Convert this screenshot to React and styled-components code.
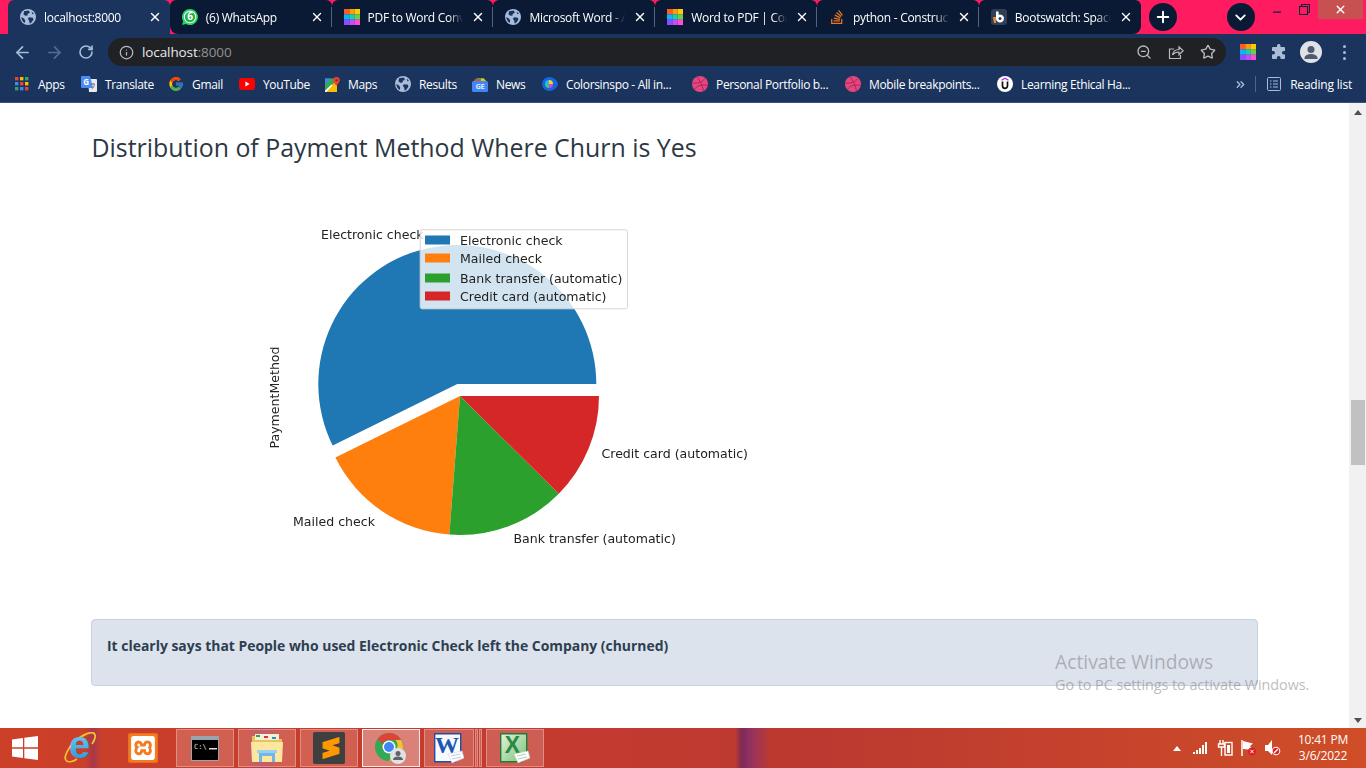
import React from "react"
import styled, { createGlobalStyle } from "styled-components"
import { FaStackOverflow } from "react-icons/fa"
import { FcGoogle } from "react-icons/fc"
import { SiXampp, SiSublimetext } from "react-icons/si"
import { ArrowLeft, ArrowRight, RotateCw, Info, ZoomOut, Star, Plus, ChevronDown, X, Minus, ChevronsRight } from "lucide-react"

const Global = createGlobalStyle`
  html, body { margin: 0; padding: 0; height: 100%; overflow: hidden; background: #fff; }
  * { box-sizing: border-box; }
`

const Screen = styled.div`
  width: 1366px;
  height: 768px;
  display: flex;
  flex-direction: column;
  overflow: hidden;
  position: relative;
  font-family: "Open Sans", "Liberation Sans", sans-serif;
`

/* ---- browser chrome ---- */
const TabStrip = styled.div`
  height: 34px;
  flex: none;
  display: flex;
  align-items: flex-end;
  padding-left: 8px;
  background: #ff1b60;
  color: #fff;
`

const Tab = styled.div`
  position: relative;
  width: 161.8px;
  height: 34px;
  flex: none;
  display: flex;
  align-items: center;
  padding: 0 8px 0 12px;
  gap: 8px;
  font-size: 12px;
  letter-spacing: -0.28px;
  white-space: nowrap;
  background: ${p => (p.$active ? "#1a345e" : "#0a1a35")};
  border-radius: 6px 6px 0 0;
  ${p => p.$afterActive && "border-bottom-left-radius: 8px;"}
  ${p => p.$last && "border-bottom-right-radius: 8px;"}
  ${p => p.$sep && `
    &::after {
      content: "";
      position: absolute;
      right: 0;
      top: 7px;
      bottom: 7px;
      width: 1px;
      background: #56637a;
    }
  `}
`

const TabTitle = styled.span`
  flex: 1;
  min-width: 0;
  overflow: hidden;
  -webkit-mask-image: linear-gradient(90deg, #000 85%, transparent);
  mask-image: linear-gradient(90deg, #000 85%, transparent);
`

const TabClose = styled(X)`
  flex: none;
  width: 14px;
  height: 14px;
`

const RoundButton = styled.div`
  width: 28px;
  height: 28px;
  flex: none;
  border-radius: 50%;
  background: #0a1a35;
  margin-left: ${p => p.$left}px;
  align-self: center;
  display: flex;
  align-items: center;
  justify-content: center;
`

const WindowControls = styled.div`
  align-self: flex-start;
  display: flex;
  margin-left: auto;
  height: 19px;
  padding-right: 3px;
`

const WinButton = styled.div`
  width: ${p => p.$w}px;
  height: 19px;
  padding-top: ${p => p.$pt || 0}px;
  display: flex;
  align-items: center;
  justify-content: center;
  background: ${p => p.$bg || "transparent"};
`

const Toolbar = styled.div`
  height: 35px;
  flex: none;
  display: flex;
  align-items: center;
  background: #1a345e;
  padding: 1px 0 0 6px;
  color: #a9bcd8;
`

const NavIcon = styled.div`
  width: 32px;
  height: 28px;
  flex: none;
  margin-left: ${p => p.$left || 0}px;
  display: flex;
  align-items: center;
  justify-content: center;
  color: ${p => (p.$off ? "#566c90" : "#a9bcd8")};
`

const Omnibox = styled.div`
  width: 1118px;
  height: 28px;
  margin-left: 6px;
  flex: none;
  display: flex;
  align-items: center;
  border-radius: 14px;
  background: #202124;
  padding: 0 2px 0 11px;
  font-size: 13.5px;
  letter-spacing: -0.1px;
  color: #e8eaed;
`

const Host = styled.span`
  flex: 1;
  margin-left: 8px;
  span { color: #8f9296; }
`

const OmniIcon = styled.div`
  width: 32px;
  display: flex;
  justify-content: center;
  color: #b8bbbf;
`

const ToolIcons = styled.div`
  display: flex;
  align-items: center;
  margin-left: 14px;
`

const Avatar = styled.div`
  width: 22px;
  height: 22px;
  border-radius: 50%;
  background: #dfe3e8;
  overflow: hidden;
  margin: 0 21px 0 5px;
`

const Dots = styled.div`
  display: flex;
  flex-direction: column;
  gap: 3px;
  i { display: block; width: 3px; height: 3px; border-radius: 50%; background: #a9bcd8; }
`

const BookmarkBar = styled.div`
  height: 34px;
  flex: none;
  display: flex;
  align-items: center;
  background: #1a345e;
  border-bottom: 1px solid #3b5278;
  padding: 0 0 3px 15px;
  color: #fff;
  font-size: 12px;
  letter-spacing: -0.34px;
`

const Bookmark = styled.div`
  width: ${p => p.$w}px;
  flex: none;
  display: flex;
  align-items: center;
  gap: ${p => p.$gap || 8}px;
  white-space: nowrap;
`

const BarEnd = styled.div`
  margin-left: auto;
  display: flex;
  align-items: center;
  padding-right: 14px;
  color: #a9bcd8;
`

const BarDivider = styled.div`
  width: 1px;
  height: 16px;
  background: #4d6488;
  margin: 0 11px 0 8px;
`

const ReadingLabel = styled.span`
  color: #fff;
  margin-left: 9px;
  letter-spacing: -0.2px;
`

/* ---- page ---- */
const Viewport = styled.div`
  flex: 1;
  min-height: 0;
  display: flex;
  background: #fff;
`

const Main = styled.main`
  flex: 1;
  min-width: 0;
  padding: 27px 91px 0 91px;
`

const Title = styled.h3`
  margin: 0 0 0 0.5px;
  font-size: 24.9px;
  line-height: 34px;
  font-weight: 400;
  color: #2d3845;
`

const Chart = styled.svg`
  display: block;
  width: 500px;
  height: 330px;
  margin: 56px 0 0 169px;
  filter: blur(0.25px);
  text { font-family: "DejaVu Sans", sans-serif; font-size: 12.55px; fill: #222; }
`

const Alert = styled.div`
  margin-top: 69px;
  height: 67px;
  padding: 16px 15px;
  background: #dce3ec;
  border: 1px solid #c6d2df;
  border-radius: 4px;
  font-size: 13.93px;
  line-height: 20px;
  font-weight: 700;
  color: #2d3e50;
`

const Scrollbar = styled.div`
  width: 17px;
  flex: none;
  background: #f1f1f1;
  position: relative;
`

const ScrollThumb = styled.div`
  position: absolute;
  top: 297px;
  left: 2px;
  right: 1px;
  height: 65px;
  background: #c1c1c1;
`

const ScrollArrow = styled.div`
  position: absolute;
  left: 5px;
  width: 0;
  height: 0;
  border-left: 4px solid transparent;
  border-right: 4px solid transparent;
  ${p => (p.$up ? "top: 7px; border-bottom: 5px solid #505050;" : "bottom: 5px; border-top: 5px solid #505050;")}
`

const Watermark = styled.div`
  position: absolute;
  left: 1055px;
  top: 649px;
  color: rgba(120, 120, 120, 0.5);
  font-family: "Open Sans", sans-serif;
  pointer-events: none;
`

const WatermarkTitle = styled.div`
  font-size: 19.3px;
  line-height: 26px;
`

const WatermarkText = styled.div`
  font-size: 14.4px;
  line-height: 19px;
  letter-spacing: -0.05px;
`

/* ---- taskbar ---- */
const Taskbar = styled.div`
  height: 40px;
  flex: none;
  display: flex;
  align-items: center;
  color: #fff;
  background:
    linear-gradient(90deg, transparent 735px, #7c2a55 742px, #8e2f63 748px, #a33650 758px, transparent 770px),
    linear-gradient(90deg, transparent 85px, #a8384a 93px, transparent 102px, transparent 245px, #b03c50 262px, transparent 280px),
    linear-gradient(90deg, #cc4029, #c23a30 45%, #bb3930 60%, #c5432c 80%, #cf4e27);
`

const Pinned = styled.div`
  width: ${p => p.$w}px;
  margin-right: ${p => p.$right || 0}px;
  flex: none;
  display: flex;
  justify-content: center;
`

const TaskButton = styled.div`
  width: ${p => p.$w || 58}px;
  height: 38px;
  margin-right: ${p => (p.$gap === undefined ? 4 : p.$gap)}px;
  flex: none;
  display: flex;
  align-items: center;
  justify-content: center;
  background: ${p => (p.$active ? "rgba(255,255,255,0.36)" : "rgba(255,255,255,0.18)")};
  border: 1px solid ${p => (p.$active ? "rgba(255,255,255,0.85)" : "rgba(255,255,255,0.3)")};
`

const Tray = styled.div`
  margin-left: auto;
  display: flex;
  align-items: center;
`

const TrayIcon = styled.div`
  width: 24px;
  display: flex;
  justify-content: center;
`

const Clock = styled.div`
  width: 68px;
  margin: 0 9px 0 4px;
  text-align: center;
  font-size: 12px;
  line-height: 16px;
  letter-spacing: -0.2px;
`

/* ---- small drawings ---- */
const Globe = ({ c = "#a9bcd8", d = "#1a345e" }) => (
  <svg width="16" height="16" viewBox="0 0 16 16">
    <circle cx="8" cy="8" r="8" fill={c} />
    <path d="M4 2.2 8.6 1.5 10 3.5 7.6 5 7.6 6.6 5.4 6.8 3.5 5.4ZM9 8.2l4 .6.4 2-2.4 3.2-1.4.4-.4-3-1.4-1.4ZM1.2 8 4 9.4l1.2 2.2-.4 2.4C2.8 12.8 1.4 10.6 1.2 8Z" fill={d} />
    <path d="M11.5 2.5l2.5 2.2-1.6.6Z" fill={d} />
  </svg>
)

const Rainbow = () => {
  const colors = ["#ff5a1f", "#ff9a0a", "#ffc80a", "#0ab4ff", "#18d0b0", "#6ad04a", "#8a4dff", "#c04dff", "#ff4dd8"]
  return (
    <svg width="16" height="16" viewBox="0 0 15 15">
      {colors.map((c, i) => (
        <rect key={c} x={(i % 3) * 5} y={Math.floor(i / 3) * 5} width="5.1" height="5.1" fill={c} />
      ))}
    </svg>
  )
}

const WhatsApp = () => (
  <svg width="16" height="16" viewBox="0 0 16 16">
    <path d="M8 0a8 8 0 0 0-6.8 12.2L0 16l3.9-1.1A8 8 0 1 0 8 0Z" fill="#25d366" />
    <circle cx="8" cy="8" r="6.2" fill="#fff" />
    <circle cx="8" cy="8" r="5.2" fill="#25b04c" />
    <text x="8" y="11.4" textAnchor="middle" fontSize="10" fontWeight="700" fill="#fff" fontFamily="Open Sans">6</text>
  </svg>
)

const Bootswatch = () => (
  <svg width="16" height="16" viewBox="0 0 16 16">
    <rect width="16" height="16" rx="3" fill="#2f4056" />
    <path d="M5 2.5h2.6v3.2a4 4 0 1 1-2.6 3.8Z" fill="#fff" />
    <circle cx="9" cy="9.5" r="1.5" fill="#2f4056" />
    <path d="M2 8h3v6H3Z" fill="#e8893a" />
  </svg>
)

const Apps = () => {
  const colors = ["#ea4335", "#fbbc05", "#34a853", "#4285f4", "#ea4335", "#fbbc05", "#34a853", "#4285f4", "#ea4335"]
  return (
    <svg width="14" height="14" viewBox="0 0 14 14">
      {colors.map((c, i) => (
        <rect key={i} x={(i % 3) * 5} y={Math.floor(i / 3) * 5} width="3.4" height="3.4" fill={c} />
      ))}
    </svg>
  )
}

const Translate = () => (
  <svg width="16" height="16" viewBox="0 0 16 16">
    <path d="M7 3h8a1 1 0 0 1 1 1v11a1 1 0 0 1-1 1H8Z" fill="#e8eaed" />
    <path d="M1 0h8l3 12H1a1 1 0 0 1-1-1V1a1 1 0 0 1 1-1Z" fill="#4b8bf5" />
    <text x="5" y="9" textAnchor="middle" fontSize="8" fontWeight="700" fill="#fff" fontFamily="Open Sans">G</text>
    <path d="M10 8h4M12 7v1.5M10.8 13c1.5-1 2.4-2.5 2.6-4.6" stroke="#777" strokeWidth=".9" fill="none" />
  </svg>
)

const YouTube = () => (
  <svg width="16" height="12" viewBox="0 0 16 12">
    <rect width="16" height="12" rx="3" fill="#f00" />
    <path d="M6.4 3.4v5.2L10.6 6Z" fill="#fff" />
  </svg>
)

const Maps = () => (
  <svg width="15" height="15" viewBox="0 0 15 15">
    <path d="M0 1.5h12v13.5H0Z" fill="#34a853" />
    <path d="M0 15 12 3v12Z" fill="#fbbc05" />
    <path d="M0 1.5h6L0 7.5Z" fill="#4285f4" />
    <path d="M0 15 7 8" stroke="#fff" strokeWidth="1.6" />
    <path d="M11.5 0a3.3 3.3 0 0 0-3.3 3.3c0 2.2 3.3 5.2 3.3 5.2s3.3-3 3.3-5.2A3.3 3.3 0 0 0 11.5 0Z" fill="#ea4335" />
    <circle cx="11.5" cy="3.3" r="1.1" fill="#8c1d18" />
  </svg>
)

const News = () => (
  <svg width="16" height="15" viewBox="0 0 16 15">
    <path d="M2 4 5 1h6l3 3Z" fill="#34a853" />
    <path d="M3 2h4l1 2H2Z" fill="#ea4335" />
    <path d="M9 1.5h3L14 4H9Z" fill="#fbbc05" />
    <rect x="0" y="4" width="16" height="11" rx="1.5" fill="#4285f4" />
    <text x="8" y="12.4" textAnchor="middle" fontSize="7.5" fontWeight="700" fill="#d8e6ff" fontFamily="Open Sans">GE</text>
  </svg>
)

const Colorsinspo = () => (
  <svg width="16" height="16" viewBox="0 0 16 16">
    <path d="M7 1c4 0 9 3.500 9 7s-5 7-9 7a7 7 0 0 1 0-14Z" fill="#1565e0" />
    <path d="M7 4a4 4 0 0 1 4 4H7Z" fill="#ffd21f" />
    <path d="M11 8a4 4 0 0 1-4 4V8Z" fill="#e83fd0" />
    <path d="M7 12a4 4 0 0 1-4-4h4Z" fill="#2fd07a" />
    <path d="M3 8a4 4 0 0 1 4-4v4Z" fill="#19c0f0" />
  </svg>
)

const Dribbble = () => (
  <svg width="16" height="16" viewBox="0 0 16 16" fill="none">
    <circle cx="8" cy="8" r="8" fill="#e2487f" />
    <path d="M5 1c3 3.500 5.500 8.500 6.500 14M.5 7c5 .5 9.500-.5 12.500-4.500M2.500 13.500C4.500 10 9 8 15.800 9.500" stroke="#b32358" strokeWidth="1" />
  </svg>
)

const Learning = () => (
  <svg width="16" height="16" viewBox="0 0 16 16">
    <circle cx="8" cy="8" r="8" fill="#fff" />
    <path d="M4.500 4.200 8 2.200l3.500 2" stroke="#a435f0" strokeWidth="1.3" fill="none" />
    <path d="M5.500 5.600v4.200a2.500 2.500 0 0 0 5 0V5.600" stroke="#111" strokeWidth="1.700" fill="none" />
  </svg>
)

const ReadingList = () => (
  <svg width="14" height="14" viewBox="0 0 14 14" fill="none" stroke="currentColor">
    <rect x=".5" y=".5" width="13" height="13" rx="1" />
    <path d="M3 4h1.500M6 4h5M3 7h1.500M6 7h5M3 10h1.500M6 10h5" />
  </svg>
)

const ShareBox = () => (
  <svg width="16" height="16" viewBox="0 0 16 16" fill="none" stroke="currentColor" strokeWidth="1.200">
    <path d="M6 5H1.500v9.500h11V11" />
    <path d="M4.500 11c.5-3.500 3-5.500 6.500-5.500V2.800l4.200 4-4.200 4V8c-2.500 0-5 1-6.500 3Z" />
  </svg>
)

const Puzzle = () => (
  <svg width="16" height="16" viewBox="0 0 16 16" fill="currentColor">
    <path d="M6 1.500a1.800 1.800 0 0 1 3.500 0V3h3.500a1 1 0 0 1 1 1v3h-1.200a1.800 1.800 0 0 0 0 3.600H14V14a1 1 0 0 1-1 1H9.500v-1.200a1.800 1.800 0 0 0-3.600 0V15H2a1 1 0 0 1-1-1v-3.400h1.200a1.800 1.800 0 0 0 0-3.600H1V4a1 1 0 0 1 1-1h4Z" />
  </svg>
)

const Person = () => (
  <svg width="22" height="22" viewBox="0 0 22 22" fill="#4f5b6e">
    <circle cx="11" cy="8.500" r="3.500" />
    <path d="M4.500 17c0-2.800 4-4 6.500-4s6.500 1.200 6.500 4v1h-13Z" />
  </svg>
)

const Restore = () => (
  <svg width="11" height="11" viewBox="0 0 11 11" fill="none" stroke="#10203a" strokeWidth="1.100">
    <rect x=".5" y="2.500" width="8" height="8" />
    <path d="M2.500 2.500V.5h8v8h-2" />
  </svg>
)

const WinLogo = () => (
  <svg width="26" height="24" viewBox="0 0 26 24" fill="#fff">
    <path d="M0 3.600 11 2v9.300H0ZM12.300 1.800 26 0v11.300H12.300ZM0 12.700h11V22L0 20.400ZM12.300 12.700H26V24l-13.700-1.800Z" />
  </svg>
)

const IE = () => (
  <svg width="32" height="32" viewBox="0 0 32 32">
    <defs>
      <linearGradient id="ieBlue" x1="0" y1="0" x2="0" y2="1">
        <stop offset="0" stopColor="#7fdcf8" />
        <stop offset="1" stopColor="#1c8fd8" />
      </linearGradient>
    </defs>
    <path d="M2 28C-1 25 6 12 15 6S30-1 31 3c1 3-1 6-3 9" fill="none" stroke="#f2c230" strokeWidth="1.800" />
    <text x="15.500" y="26" textAnchor="middle" fontSize="38" fontWeight="700" fill="url(#ieBlue)" fontFamily="Liberation Sans">e</text>
    <path d="M2 28c1 3 7 2 11-1" fill="none" stroke="#f2c230" strokeWidth="1.600" />
  </svg>
)

const Xampp = () => (
  <svg width="30" height="30" viewBox="0 0 30 30">
    <rect width="30" height="30" rx="2" fill="#e8701c" />
    <rect x="1" y="1" width="28" height="28" rx="1.500" fill="#f47b20" />
    <SiXampp x="3" y="3" size="24" color="#fff" />
  </svg>
)

const Cmd = () => (
  <svg width="28" height="25" viewBox="0 0 28 25">
    <rect width="28" height="25" fill="#9aa4ad" />
    <rect x="1" y="4" width="26" height="20" fill="#000" />
    <text x="3" y="13" fontSize="7" fill="#ddd" fontFamily="DejaVu Sans Mono">C:\</text>
    <rect x="18" y="12" width="8" height="1.500" fill="#ddd" />
  </svg>
)

const Folder = () => (
  <svg width="32" height="30" viewBox="0 0 32 30">
    <path d="M1 3h10l2 3h18v7H1Z" fill="#e9c25c" />
    <rect x="4" y="1" width="24" height="6" fill="#f6f0d8" />
    <rect x="5" y="2" width="4" height="2" fill="#28a745" />
    <rect x="13" y="3" width="4" height="2" fill="#d33" />
    <rect x="21" y="4" width="4" height="2" fill="#29a" />
    <path d="M0 9h32l-1 20H1Z" fill="#fbe79e" />
    <path d="M8 20h16v9h-3v-6H11v6H8Z" fill="#6fb7e8" />
    <rect x="6" y="17" width="20" height="3" fill="#9ad0f2" />
  </svg>
)

const Sublime = () => (
  <svg width="32" height="32" viewBox="0 0 32 32">
    <rect width="32" height="32" rx="2" fill="#3f3f3f" />
    <SiSublimetext x="7" y="5" size="22" color="#ff9800" />
  </svg>
)

const Chrome = () => (
  <svg width="32" height="32" viewBox="0 0 32 32">
    <circle cx="14" cy="15" r="14" fill="#34a853" />
    <path d="M14 1a14 14 0 0 1 12.100 7H14a7 7 0 0 0-6.400 4L2.700 7A14 14 0 0 1 14 1Z" fill="#db4437" />
    <path d="M26.100 8A14 14 0 0 1 14 29l6-10.500A7 7 0 0 0 20.500 8Z" fill="#fbc02d" />
    <circle cx="14" cy="15" r="6.500" fill="#fff" />
    <circle cx="14" cy="15" r="5" fill="#4285f4" />
    <circle cx="23" cy="24" r="8" fill="#dfe1e5" />
    <circle cx="23" cy="21.500" r="2.500" fill="#5f6368" />
    <path d="M18 28c0-2.500 2.500-3.500 5-3.500s5 1 5 3.500Z" fill="#5f6368" />
  </svg>
)

const Word = () => (
  <svg width="30" height="30" viewBox="0 0 30 30">
    <path d="M.7.7h26v22l-5 6H.7Z" fill="#f8fafd" stroke="#1f4fa3" strokeWidth="1.400" />
    <text x="13" y="20" textAnchor="middle" fontSize="24" fontWeight="700" fill="#1e56b3" fontFamily="Liberation Serif">W</text>
    <path d="M14 21l14-3 2 7-12 5Z" fill="#fff" stroke="#c9d4e6" strokeWidth=".6" />
    <path d="M17 23l9-2M18 26l9-2" stroke="#aebbd0" strokeWidth=".8" />
  </svg>
)

const Excel = () => (
  <svg width="30" height="30" viewBox="0 0 30 30">
    <defs>
      <linearGradient id="xlBack" x1="0" y1="0" x2="1" y2="1">
        <stop offset="0" stopColor="#e4f3dd" />
        <stop offset="1" stopColor="#7cc07a" />
      </linearGradient>
    </defs>
    <path d="M.7.7h26v22l-5 6H.7Z" fill="url(#xlBack)" stroke="#1f7a3c" strokeWidth="1.400" />
    <text x="12.500" y="20" textAnchor="middle" fontSize="23" fontWeight="700" fill="#2a8a45" fontFamily="Liberation Sans">X</text>
    <path d="M14 21l14-3 2 7-12 5Z" fill="#fff" stroke="#b8d6b8" strokeWidth=".6" />
    <path d="M17 23l9-2M18 26l9-2" stroke="#9cc09c" strokeWidth=".8" />
  </svg>
)

const Signal = () => (
  <svg width="16" height="12" viewBox="0 0 16 12" fill="#fff">
    <rect x="0" y="10" width="2" height="2" /><rect x="3" y="8" width="2" height="4" /><rect x="6" y="6" width="2" height="6" />
    <rect x="9" y="3" width="2" height="9" /><rect x="12" y="0" width="2" height="12" />
  </svg>
)

const Battery = () => (
  <svg width="16" height="16" viewBox="0 0 16 16" fill="none" stroke="#fff" strokeWidth="1.400">
    <rect x="8" y="2.500" width="7" height="12.500" />
    <rect x="10" y="5" width="3" height="8" fill="#fff" stroke="none" />
    <path d="M3 0v4M6 0v4M1.500 4h6v3h-6ZM4.500 7v9" />
  </svg>
)

const Flag = () => (
  <svg width="16" height="16" viewBox="0 0 16 16">
    <path d="M1 0v16" stroke="#fff" strokeWidth="1.500" />
    <path d="M2 1l10 2.500L9 6l3 4-10-1Z" fill="#fff" />
    <circle cx="11" cy="11.500" r="4" fill="#e02020" />
    <path d="M9.300 9.800l3.400 3.400M12.700 9.800l-3.400 3.400" stroke="#fff" />
  </svg>
)

const Volume = () => (
  <svg width="16" height="16" viewBox="0 0 16 16">
    <path d="M0 5h3l4-5v15l-4-4H0Z" fill="#fff" />
    <circle cx="11" cy="11" r="4.300" fill="#fff" />
    <circle cx="11" cy="11" r="3.300" fill="#e02020" />
    <path d="M9 13l4-4" stroke="#fff" strokeWidth="1.200" />
  </svg>
)

/* ---- data ---- */
const tabs = [
  { title: "localhost:8000", icon: <Globe /> },
  { title: "(6) WhatsApp", icon: <WhatsApp /> },
  { title: "PDF to Word Converter", icon: <Rainbow /> },
  { title: "Microsoft Word - Assignment", icon: <Globe /> },
  { title: "Word to PDF | Convert", icon: <Rainbow /> },
  { title: "python - Construct a", icon: <FaStackOverflow size={16} color="#e8761f" /> },
  { title: "Bootswatch: Spacelab", icon: <Bootswatch /> }
]

const bookmarks = [
  { w: 66, gap: 9, label: "Apps", icon: <Apps /> },
  { w: 87, label: "Translate", icon: <Translate /> },
  { w: 71, label: "Gmail", icon: <FcGoogle size={16} /> },
  { w: 86, label: "YouTube", icon: <YouTube /> },
  { w: 70, gap: 8, label: "Maps", icon: <Maps /> },
  { w: 77, label: "Results", icon: <Globe /> },
  { w: 70, label: "News", icon: <News /> },
  { w: 150, label: "Colorsinspo - All in...", icon: <Colorsinspo /> },
  { w: 153, label: "Personal Portfolio b...", icon: <Dribbble /> },
  { w: 152, label: "Mobile breakpoints...", icon: <Dribbble /> },
  { w: 170, label: "Learning Ethical Ha...", icon: <Learning /> }
]

const legend = [
  { label: "Electronic check", color: "#1f77b4", y: 240 },
  { label: "Mailed check", color: "#ff7f0e", y: 258 },
  { label: "Bank transfer (automatic)", color: "#2ca02c", y: 278 },
  { label: "Credit card (automatic)", color: "#d62728", y: 296 }
]

// angles in degrees, counter-clockwise from the +x axis like matplotlib
const slice = (cx, cy, r, from, to) => {
  const pt = a => [cx + r * Math.cos((a * Math.PI) / 180), cy - r * Math.sin((a * Math.PI) / 180)]
  const [x1, y1] = pt(from)
  const [x2, y2] = pt(to)
  return `M${cx} ${cy}L${x1} ${y1}A${r} ${r} 0 ${to - from > 180 ? 1 : 0} 0 ${x2} ${y2}Z`
}

const App = () => (
  <Screen>
    <Global />
    <TabStrip>
      {tabs.map((t, i) => (
        <Tab
          key={t.title}
          $active={i === 0}
          $afterActive={i === 1}
          $last={i === tabs.length - 1}
          $sep={i > 0 && i < tabs.length - 1}
        >
          {t.icon}
          <TabTitle>{t.title}</TabTitle>
          <TabClose strokeWidth={2.4} />
        </Tab>
      ))}
      <RoundButton $left={8}>
        <Plus size={18} strokeWidth={2.6} />
      </RoundButton>
      <RoundButton $left={50}>
        <ChevronDown size={17} strokeWidth={2.6} />
      </RoundButton>
      <WindowControls>
        <WinButton $w={26} $pt={4}><Minus size={12} color="#10203a" strokeWidth={2.5} /></WinButton>
        <WinButton $w={28}><Restore /></WinButton>
        <WinButton $w={45} $bg="#c75050"><X size={13} strokeWidth={2.6} /></WinButton>
      </WindowControls>
    </TabStrip>

    <Toolbar>
      <NavIcon><ArrowLeft size={19} strokeWidth={2.2} /></NavIcon>
      <NavIcon $off><ArrowRight size={19} strokeWidth={2.2} /></NavIcon>
      <NavIcon><RotateCw size={16} strokeWidth={2.4} /></NavIcon>
      <Omnibox>
        <Info size={15} color="#b8bbbf" />
        <Host>localhost<span>:8000</span></Host>
        <OmniIcon><ZoomOut size={16} /></OmniIcon>
        <OmniIcon><ShareBox /></OmniIcon>
        <OmniIcon><Star size={16} /></OmniIcon>
      </Omnibox>
      <ToolIcons>
        <Rainbow />
        <NavIcon $left={7}><Puzzle /></NavIcon>
        <Avatar><Person /></Avatar>
        <Dots><i /><i /><i /></Dots>
      </ToolIcons>
    </Toolbar>

    <BookmarkBar>
      {bookmarks.map(b => (
        <Bookmark key={b.label} $w={b.w} $gap={b.gap}>
          {b.icon}
          {b.label}
        </Bookmark>
      ))}
      <BarEnd>
        <ChevronsRight size={13} strokeWidth={2.5} />
        <BarDivider />
        <ReadingList />
        <ReadingLabel>Reading list</ReadingLabel>
      </BarEnd>
    </BookmarkBar>

    <Viewport>
      <Main>
        <Title>Distribution of Payment Method Where Churn is Yes</Title>
        <Chart viewBox="260 220 500 330">
          <path d={slice(457.3, 384, 139, 0, 206.3)} fill="#1f77b4" />
          <path d={slice(460, 396, 139, 206.3, 265.6)} fill="#ff7f0e" />
          <path d={slice(460, 396, 139, 265.6, 315.3)} fill="#2ca02c" />
          <path d={slice(460, 396, 139, 315.3, 360)} fill="#d62728" />
          <text x="321" y="239">Electronic check</text>
          <text x="293" y="526">Mailed check</text>
          <text x="513.500" y="543">Bank transfer (automatic)</text>
          <text x="601.500" y="458">Credit card (automatic)</text>
          <text transform="translate(279 448.500) rotate(-90)">PaymentMethod</text>
          <rect x="420.200" y="229.800" width="207.300" height="79" rx="2" fill="#fff" fillOpacity=".8" stroke="#d6d6d6" />
          {legend.map(l => (
            <g key={l.label}>
              <rect x="425" y={l.y - 4.500} width="25" height="9" fill={l.color} />
              <text x="460" y={l.y + 4.500}>{l.label}</text>
            </g>
          ))}
        </Chart>
        <Alert>It clearly says that People who used Electronic Check left the Company (churned)</Alert>
      </Main>
      <Scrollbar>
        <ScrollArrow $up />
        <ScrollThumb />
        <ScrollArrow />
      </Scrollbar>
    </Viewport>

    <Taskbar>
      <Pinned $w={49}><WinLogo /></Pinned>
      <Pinned $w={62}><IE /></Pinned>
      <Pinned $w={63} $right={2}><Xampp /></Pinned>
      <TaskButton><Cmd /></TaskButton>
      <TaskButton><Folder /></TaskButton>
      <TaskButton><Sublime /></TaskButton>
      <TaskButton $active><Chrome /></TaskButton>
      <TaskButton $w={50} $gap={1}><Word /></TaskButton>
      <TaskButton $w={3} $gap={1} />
      <TaskButton $w={3} $gap={4} />
      <TaskButton><Excel /></TaskButton>
      <Tray>
        <TrayIcon>
          <svg width="8" height="5" viewBox="0 0 8 5" fill="#fff"><path d="M0 5 4 0l4 5Z" /></svg>
        </TrayIcon>
        <TrayIcon><Signal /></TrayIcon>
        <TrayIcon><Battery /></TrayIcon>
        <TrayIcon><Flag /></TrayIcon>
        <TrayIcon><Volume /></TrayIcon>
        <Clock>10:41 PM<br />3/6/2022</Clock>
      </Tray>
    </Taskbar>

    <Watermark>
      <WatermarkTitle>Activate Windows</WatermarkTitle>
      <WatermarkText>Go to PC settings to activate Windows.</WatermarkText>
    </Watermark>
  </Screen>
)

export default App
